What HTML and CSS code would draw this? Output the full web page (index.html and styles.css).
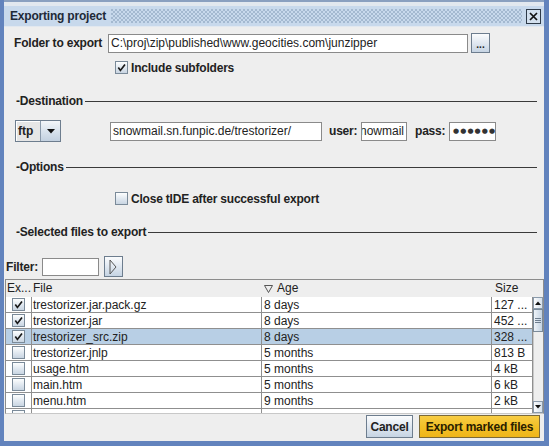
FILE: index.html
```html
<!DOCTYPE html>
<html>
<head>
<meta charset="utf-8">
<link rel="stylesheet" href="styles.css">
</head>
<body>
<div class="window">
  <div class="titlebar">
    <div class="tb-inner">
      <span class="title">Exporting project</span>
      <span class="bumps"></span>
      <span class="close"><svg width="15" height="15" viewBox="0 0 15 15"><rect x="0.5" y="0.5" width="14" height="14" fill="#d3e0ee" stroke="#2e3a48"/><path d="M4 4 L11 11 M11 4 L4 11" stroke="#111" stroke-width="1.7"/></svg></span>
    </div>
  </div>
  <div class="content">
    <div class="folder-row">
      <span class="lbl folder-lbl">Folder to export</span>
      <span class="field path-field">C:\proj\zip\published\www.geocities.com\junzipper</span>
      <span class="btn dots-btn">...</span>
    </div>
    <div class="check-row first-check">
      <span class="cb"><svg width="11" height="11" viewBox="0 0 11 11"><path d="M2.3 5.6 L4.4 8.4 L9 2.4" fill="none" stroke="#1a1a1a" stroke-width="1.7"/></svg></span>
      <span class="lbl">Include subfolders</span>
    </div>
    <div class="section sec-dest"><span class="lbl">-Destination</span><span class="rule"></span></div>
    <div class="dest-row">
      <span class="combo"><span class="combo-val">ftp</span><span class="combo-arrow"><svg width="8" height="5" viewBox="0 0 8 5"><path d="M0 0 L8 0 L4 4.5 Z" fill="#111"/></svg></span></span>
      <span class="field url-field">snowmail.sn.funpic.de/trestorizer/</span>
      <span class="lbl user-lbl">user:</span>
      <span class="field user-field"><span class="user-text">snowmail</span></span>
      <span class="lbl pass-lbl">pass:</span>
      <span class="field pass-field">●●●●●●</span>
    </div>
    <div class="section sec-opt"><span class="lbl">-Options</span><span class="rule"></span></div>
    <div class="check-row second-check">
      <span class="cb"></span>
      <span class="lbl">Close tIDE after successful export</span>
    </div>
    <div class="section sec-sel"><span class="lbl">-Selected files to export</span><span class="rule"></span></div>
    <div class="filter-row">
      <span class="lbl">Filter:</span>
      <span class="field filter-field"></span>
      <span class="btn go-btn"><svg width="8" height="16" viewBox="0 0 8 16"><path d="M1 1 L7 8 L1 15 Z" fill="none" stroke="#555" stroke-width="1"/></svg></span>
    </div>
    <div class="table">
      <div class="thead">
        <div class="th c-ex">Ex...</div>
        <div class="th c-file">File</div>
        <div class="th c-age"><svg class="sort" width="9" height="8" viewBox="0 0 9 8"><path d="M0.5 0.5 L8.5 0.5 L4.5 7.5 Z" fill="none" stroke="#555" stroke-width="1"/></svg>Age</div>
        <div class="th c-size">Size</div>
        <div class="th c-corner"></div>
      </div>
      <div class="tbody">
        <div class="rows">
          <div class="tr"><div class="td c-ex"><span class="cb"><svg width="11" height="11" viewBox="0 0 11 11"><path d="M2.3 5.6 L4.4 8.4 L9 2.4" fill="none" stroke="#1a1a1a" stroke-width="1.7"/></svg></span></div><div class="td c-file">trestorizer.jar.pack.gz</div><div class="td c-age">8 days</div><div class="td c-size">127 ...</div></div>
          <div class="tr"><div class="td c-ex"><span class="cb"><svg width="11" height="11" viewBox="0 0 11 11"><path d="M2.3 5.6 L4.4 8.4 L9 2.4" fill="none" stroke="#1a1a1a" stroke-width="1.7"/></svg></span></div><div class="td c-file">trestorizer.jar</div><div class="td c-age">8 days</div><div class="td c-size">452 ...</div></div>
          <div class="tr sel"><div class="td c-ex"><span class="cb"><svg width="11" height="11" viewBox="0 0 11 11"><path d="M2.3 5.6 L4.4 8.4 L9 2.4" fill="none" stroke="#1a1a1a" stroke-width="1.7"/></svg></span></div><div class="td c-file">trestorizer_src.zip</div><div class="td c-age">8 days</div><div class="td c-size">328 ...</div></div>
          <div class="tr"><div class="td c-ex"><span class="cb"></span></div><div class="td c-file">trestorizer.jnlp</div><div class="td c-age">5 months</div><div class="td c-size">813 B</div></div>
          <div class="tr"><div class="td c-ex"><span class="cb"></span></div><div class="td c-file">usage.htm</div><div class="td c-age">5 months</div><div class="td c-size">4 kB</div></div>
          <div class="tr"><div class="td c-ex"><span class="cb"></span></div><div class="td c-file">main.htm</div><div class="td c-age">5 months</div><div class="td c-size">6 kB</div></div>
          <div class="tr"><div class="td c-ex"><span class="cb"></span></div><div class="td c-file">menu.htm</div><div class="td c-age">9 months</div><div class="td c-size">2 kB</div></div>
          <div class="tr"><div class="td c-ex"><span class="cb"></span></div><div class="td c-file"></div><div class="td c-age"></div><div class="td c-size"></div></div>
        </div>
        <div class="vscroll">
          <div class="sb-btn"><svg width="6" height="4" viewBox="0 0 6 4"><path d="M0 4 L3 0.5 L6 4 Z" fill="#111"/></svg></div>
          <div class="sb-thumb"><svg width="6" height="5" viewBox="0 0 6 5"><path d="M0 0.5 H6 M0 2.5 H6 M0 4.5 H6" stroke="#6d7d8e" stroke-width="1"/></svg></div>
          <div class="sb-track"></div>
          <div class="sb-btn"><svg width="6" height="4" viewBox="0 0 6 4"><path d="M0 0 L3 3.5 L6 0 Z" fill="#111"/></svg></div>
        </div>
      </div>
    </div>
    <div class="buttons">
      <span class="btn lbl btn-cancel">Cancel</span>
      <span class="btn lbl btn-export">Export marked files</span>
    </div>
  </div>
</div>
</body>
</html>
```

FILE: styles.css
```css
* { box-sizing: border-box; }
html, body { margin: 0; padding: 0; }
body {
  width: 549px;
  height: 446px;
  overflow: hidden;
  background: #eeeeee;
  font-family: "Liberation Sans", Arial, sans-serif;
  font-size: 12px;
  color: #222;
}
svg { display: block; }

.window {
  width: 549px;
  height: 446px;
  display: flex;
  flex-direction: column;
  border-left: 4px solid #6283bd;
  border-right: 5px solid #6283bd;
  border-bottom: 5px solid #6283bd;
  background: #eeeeee;
}

.titlebar {
  flex: none;
  height: 27px;
  border-top: 2px solid #8aa0c0;
  padding-top: 4px;
  background: #e2e8ef;
}
.tb-inner {
  height: 20px;
  display: flex;
  align-items: center;
  background: #c8d9ec;
  padding-left: 6px;
  padding-right: 3px;
}
.title {
  font-weight: bold;
  letter-spacing: -0.2px;
  color: #1e2a38;
  white-space: nowrap;
}
.bumps {
  flex: 1;
  height: 14px;
  margin: 0 4px 0 5px;
  background:
    radial-gradient(circle at 1px 1px, #a4b9d0 0.75px, transparent 1px) 0 0 / 4px 4px,
    radial-gradient(circle at 1px 1px, #a4b9d0 0.75px, transparent 1px) 2px 2px / 4px 4px,
    #c8d9ec;
}
.close { display: block; width: 15px; height: 15px; margin-top: 1px; }

.content {
  flex: 1;
  display: flex;
  flex-direction: column;
}

.lbl {
  font-weight: bold;
  letter-spacing: -0.2px;
  color: #222;
  white-space: nowrap;
}

.field {
  display: block;
  background: #ffffff;
  border: 1px solid #8a8a8a;
  height: 19px;
  line-height: 17px;
  padding-left: 2px;
  white-space: nowrap;
  overflow: hidden;
  color: #222;
}

.btn {
  display: flex;
  align-items: center;
  justify-content: center;
  border: 1px solid #6d7d8e;
  background: linear-gradient(#fbfcfd, #e3eaf2 45%, #c6d4e3);
}

/* folder row */
.folder-row {
  display: flex;
  align-items: center;
  height: 20px;
  margin-top: 6px;
  padding-left: 10px;
}
.folder-lbl { width: 94px; }
.path-field { width: 360px; }
.dots-btn {
  width: 19px;
  height: 20px;
  margin-left: 3px;
  font-weight: bold;
  font-size: 10px;
  line-height: 10px;
  padding-top: 3px;
  color: #222;
}

/* check rows */
.check-row {
  display: flex;
  align-items: center;
  height: 13px;
  padding-left: 111px;
  gap: 3px;
}
.first-check { margin-top: 8px; }
.second-check { margin-top: 18px; }
.cb {
  display: flex;
  align-items: center;
  justify-content: center;
  width: 13px;
  height: 13px;
  border: 1px solid #7a8a99;
  background: linear-gradient(#fdfefe, #dfe7ef 55%, #c9d5e2);
  flex: none;
}

/* sections */
.section {
  display: flex;
  align-items: center;
  height: 14px;
  padding-left: 12px;
  padding-right: 7px;
}
.rule {
  flex: 1;
  height: 1px;
  background: #3a3a3a;
  margin-left: 2px;
}
.sec-dest { margin-top: 20px; }
.sec-opt { margin-top: 18px; }
.sec-sel { margin-top: 20px; }

/* destination row */
.dest-row {
  display: flex;
  align-items: center;
  height: 22px;
  margin-top: 12px;
  padding-left: 11px;
}
.combo {
  display: flex;
  width: 46px;
  height: 22px;
  border: 1px solid #6d7d8e;
  flex: none;
}
.combo-val {
  width: 25px;
  background: #e6e6e6;
  border-right: 1px solid #8a9aab;
  box-shadow: inset 1px 1px 0 #ffffff;
  font-weight: bold;
  line-height: 20px;
  padding-left: 2px;
  color: #222;
}
.combo-arrow {
  flex: 1;
  display: flex;
  align-items: center;
  justify-content: center;
  background: linear-gradient(#f3f6f9, #d9e3ed 50%, #c3d1e0);
}
.url-field { width: 212px; margin-left: 49px; }
.user-lbl { width: 32px; margin-left: 7px; }
.user-field {
  width: 46px;
  display: flex;
  justify-content: flex-end;
  padding: 0 2px 0 0;
}
.user-text { flex: none; }
.pass-lbl { width: 34px; margin-left: 8px; }
.pass-field {
  width: 47px;
  font-family: "DejaVu Sans", sans-serif;
  font-size: 7px;
  letter-spacing: 1.1px;
  line-height: 17px;
  color: #333;
  padding-left: 3px;
}

/* filter row */
.filter-row {
  display: flex;
  align-items: center;
  height: 21px;
  margin-top: 17px;
  padding-left: 2px;
}
.filter-field { width: 57px; height: 18px; margin-left: 4px; }
.go-btn { width: 19px; height: 21px; margin-left: 5px; }

/* table */
.table {
  margin-top: 2px;
  margin-left: 1px;
  width: 539px;
  height: 135px;
  border: 1px solid #8c8c8c;
  border-bottom-color: #c8c8c8;
  display: flex;
  flex-direction: column;
  background: #ffffff;
}
.thead {
  display: flex;
  height: 17px;
  background: #eeeeee;
  flex: none;
}
.th {
  height: 17px;
  line-height: 17px;
  padding-left: 1px;
  white-space: nowrap;
  color: #222;
  display: flex;
  align-items: center;
}
.c-ex { width: 26px; flex: none; }
.c-file { width: 230px; flex: none; }
.c-age { width: 230px; flex: none; }
.c-size { width: 41px; flex: none; }
.c-corner { width: 10px; flex: none; }
.th.c-age { padding-left: 2px; }
.th.c-size { padding-left: 3px; }
.sort { margin-right: 4px; }

.tbody {
  display: flex;
  height: 116px;
  overflow: hidden;
}
.rows { width: 527px; flex: none; }
.tr { display: flex; height: 16px; background: #ffffff; }
.tr.sel { background: #b8cfe5; }
.td {
  height: 16px;
  line-height: 16px;
  border-right: 1px solid #8f8f8f;
  border-bottom: 1px solid #8f8f8f;
  white-space: nowrap;
  overflow: hidden;
  color: #222;
  padding-left: 2px;
}
.td.c-ex {
  display: flex;
  align-items: center;
  justify-content: center;
  padding-left: 0;
  padding-bottom: 1px;
}
.td.c-file { padding-left: 1px; }

.vscroll {
  width: 10px;
  flex: none;
  display: flex;
  flex-direction: column;
  background: #eeeeee;
}
.sb-btn {
  height: 12px;
  flex: none;
  display: flex;
  align-items: center;
  justify-content: center;
  border: 1px solid #8a9aab;
  background: linear-gradient(90deg, #fbfcfd, #d6e0eb);
}
.sb-thumb {
  height: 23px;
  flex: none;
  display: flex;
  align-items: center;
  justify-content: center;
  border: 1px solid #7a8a99;
  background: linear-gradient(90deg, #eef3f8, #c4d3e3);
}
.sb-track { flex: 1; border-left: 1px solid #c8c8c8; }

/* bottom buttons */
.buttons {
  display: flex;
  justify-content: flex-end;
  gap: 6px;
  padding-right: 4px;
  margin-top: 1px;
  height: 23px;
}
.btn-cancel { width: 47px; height: 23px; color: #222; }
.btn-export {
  width: 121px;
  height: 23px;
  color: #2a2000;
  border-color: #7a6a3a;
  background: linear-gradient(#f8cd45, #f3c027 50%, #eeb51a);
}
```
